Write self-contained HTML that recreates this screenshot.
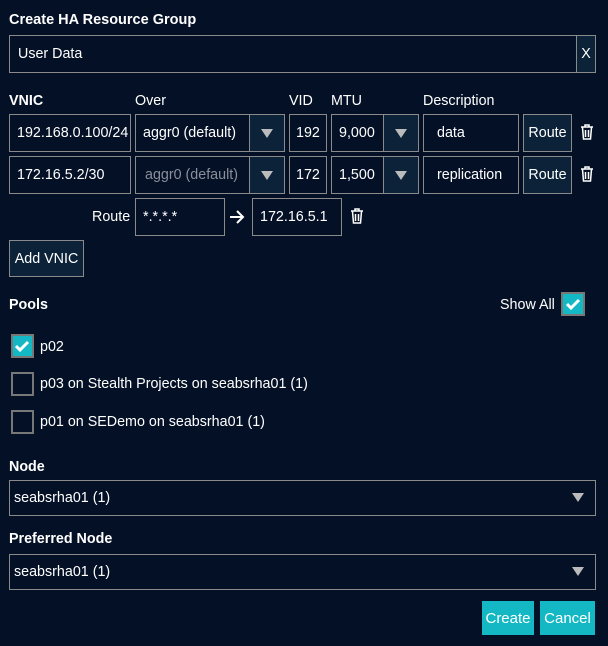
<!DOCTYPE html>
<html><head><meta charset="utf-8"><style>
body{margin:0;width:608px;height:646px;background:#041026;font-family:"Liberation Sans",sans-serif;font-size:14.3px;color:#fff;position:relative;overflow:hidden}
.a{position:absolute;box-sizing:border-box}
.in{border:1px solid #8a8a8a;background:#041026;padding-left:8px;display:flex;align-items:center;white-space:nowrap}
.btn{border:1px solid #8a8a8a;background:#0b2238;display:flex;align-items:center;justify-content:center}
.tri{width:0;height:0;border-left:6px solid transparent;border-right:6px solid transparent;border-top:9px solid #bbb}
.b{font-weight:bold}
.cb{border:2px solid #777;width:23px;height:24px}
.cbon{background:#14b8c4;border-color:#777}
.teal{background:#14b8c4;display:flex;align-items:center;justify-content:center;font-size:15px}
</style></head><body>
<div class="a b" style="left:9px;top:12px;font-size:14.5px">Create HA Resource Group</div>
<div class="a in" style="left:9px;top:35px;width:568px;height:38px;padding-left:8px">User Data</div>
<div class="a btn" style="left:576px;top:35px;width:20px;height:38px">X</div>

<div class="a b" style="left:9px;top:93px">VNIC</div>
<div class="a" style="left:135px;top:93px">Over</div>
<div class="a" style="left:289px;top:93px">VID</div>
<div class="a" style="left:331px;top:93px">MTU</div>
<div class="a" style="left:423px;top:93px">Description</div>

<div class="a in" style="left:9px;top:114px;width:122px;height:38px;padding-left:7px">192.168.0.100/24</div>
<div class="a in" style="left:135px;top:114px;width:116px;height:38px;padding-left:7px">aggr0 (default)</div>
<div class="a btn" style="left:249px;top:114px;width:36px;height:38px"><div class="tri"></div></div>
<div class="a in" style="left:289px;top:114px;width:38px;height:38px;padding-left:6px">192</div>
<div class="a in" style="left:331px;top:114px;width:53px;height:38px;padding-left:7px">9,000</div>
<div class="a btn" style="left:383px;top:114px;width:36px;height:38px"><div class="tri"></div></div>
<div class="a in" style="left:423px;top:114px;width:96px;height:38px;padding-left:13px">data</div>
<div class="a btn" style="left:523px;top:114px;width:49px;height:38px">Route</div>

<div class="a in" style="left:9px;top:156px;width:122px;height:38px;padding-left:7px">172.16.5.2/30</div>
<div class="a in" style="left:135px;top:156px;width:116px;height:38px;padding-left:9px;color:#8a8f99">aggr0 (default)</div>
<div class="a btn" style="left:249px;top:156px;width:36px;height:38px"><div class="tri"></div></div>
<div class="a in" style="left:289px;top:156px;width:38px;height:38px;padding-left:6px">172</div>
<div class="a in" style="left:331px;top:156px;width:53px;height:38px;padding-left:7px">1,500</div>
<div class="a btn" style="left:383px;top:156px;width:36px;height:38px"><div class="tri"></div></div>
<div class="a in" style="left:423px;top:156px;width:96px;height:38px;padding-left:13px">replication</div>
<div class="a btn" style="left:523px;top:156px;width:49px;height:38px">Route</div>

<div class="a" style="left:92px;top:209px">Route</div>
<div class="a in" style="left:135px;top:198px;width:90px;height:38px;padding-left:7px">*.*.*.*</div>
<svg class="a" style="left:229px;top:209px" width="16" height="16" viewBox="0 0 16 16"><path d="M1 8h13M8 2l6 6-6 6" fill="none" stroke="#fff" stroke-width="2"/></svg>
<div class="a in" style="left:252px;top:198px;width:90px;height:38px;padding-left:7px">172.16.5.1</div>

<svg class="a" style="left:580px;top:124px" width="14" height="16" viewBox="0 0 14 16"><g fill="none" stroke="#fff" stroke-width="1.5"><path d="M1 3h12M5 3V1h4v2M2.5 3.5l1 11.5h7l1-11.5M5.5 6v7M8.5 6v7"/></g></svg>
<svg class="a" style="left:580px;top:166px" width="14" height="16" viewBox="0 0 14 16"><g fill="none" stroke="#fff" stroke-width="1.5"><path d="M1 3h12M5 3V1h4v2M2.5 3.5l1 11.5h7l1-11.5M5.5 6v7M8.5 6v7"/></g></svg>
<svg class="a" style="left:350px;top:208px" width="14" height="16" viewBox="0 0 14 16"><g fill="none" stroke="#fff" stroke-width="1.5"><path d="M1 3h12M5 3V1h4v2M2.5 3.5l1 11.5h7l1-11.5M5.5 6v7M8.5 6v7"/></g></svg>

<div class="a btn" style="left:9px;top:240px;width:75px;height:37px">Add VNIC</div>

<div class="a b" style="left:9px;top:297px">Pools</div>
<div class="a" style="left:500px;top:297px">Show All</div>
<div class="a cb cbon" style="left:561px;top:292px;width:24px;height:24px"><svg width="20" height="20" viewBox="0 0 20 20"><path d="M4 10l4 4 8-8" fill="none" stroke="#fff" stroke-width="3"/></svg></div>

<div class="a cb cbon" style="left:11px;top:334px"><svg width="19" height="20" viewBox="0 0 19 20"><path d="M3 10l4 4 8-8" fill="none" stroke="#fff" stroke-width="3"/></svg></div>
<div class="a" style="left:40px;top:339px">p02</div>
<div class="a cb" style="left:11px;top:372px"></div>
<div class="a" style="left:40px;top:376px">p03 on Stealth Projects on seabsrha01 (1)</div>
<div class="a cb" style="left:11px;top:410px"></div>
<div class="a" style="left:40px;top:414px">p01 on SEDemo on seabsrha01 (1)</div>

<div class="a b" style="left:9px;top:459px">Node</div>
<div class="a in" style="left:9px;top:480px;width:587px;height:36px;padding-left:4px">seabsrha01 (1)</div>
<div class="a tri" style="left:572px;top:493px"></div>
<div class="a b" style="left:9px;top:531px">Preferred Node</div>
<div class="a in" style="left:9px;top:554px;width:587px;height:36px;padding-left:4px">seabsrha01 (1)</div>
<div class="a tri" style="left:572px;top:567px"></div>

<div class="a teal" style="left:482px;top:601px;width:52px;height:34px">Create</div>
<div class="a teal" style="left:540px;top:601px;width:55px;height:34px">Cancel</div>
</body></html>
